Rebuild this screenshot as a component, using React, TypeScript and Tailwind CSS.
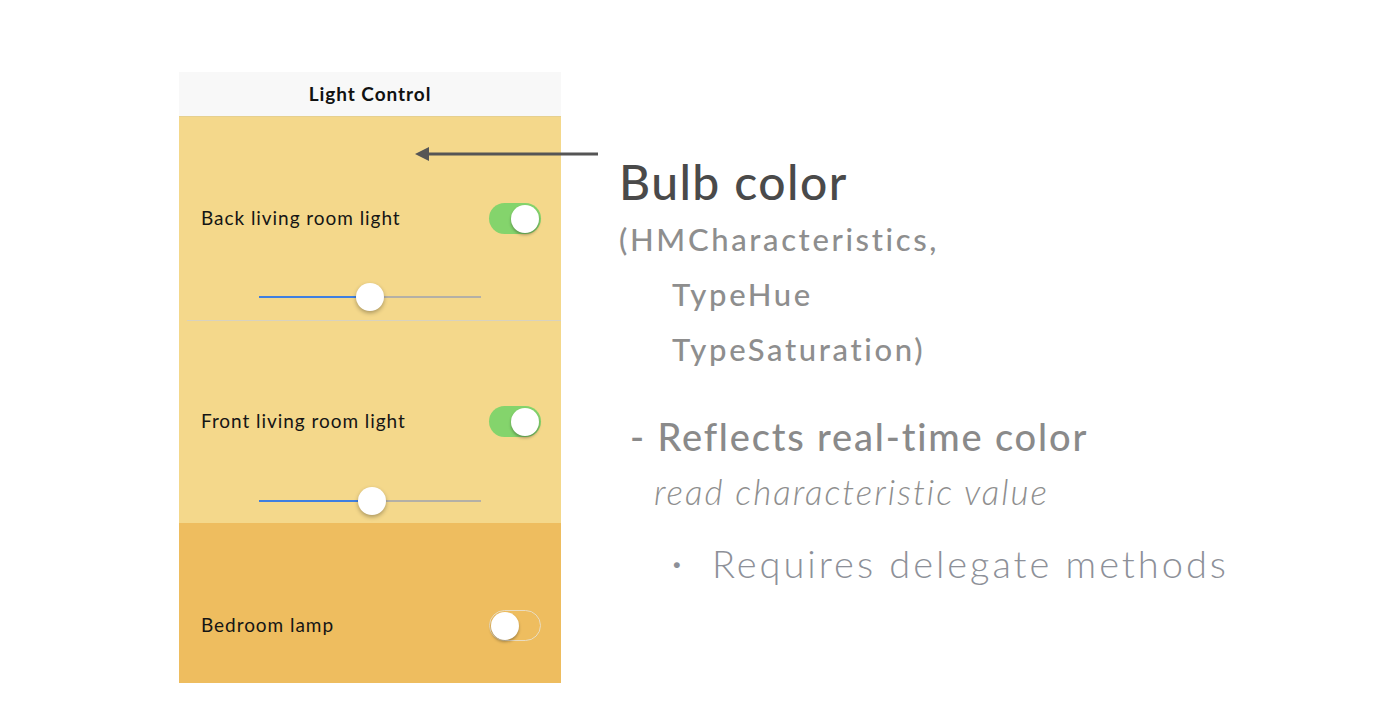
import { FunctionComponent } from "react";

const font = { fontFamily: "Lato, 'Noto Sans', sans-serif" };

type ToggleProps = { on: boolean };

const Toggle: FunctionComponent<ToggleProps> = ({ on }) => {
  return (
    <div
      className={
        on
          ? "w-[52px] h-[31px] rounded-full bg-[#84d46c] flex flex-row items-center justify-end px-[2px] box-border"
          : "w-[52px] h-[31px] rounded-full bg-transparent border-[1.5px] border-[#e9dcc0] flex flex-row items-center justify-start px-[1px] box-border"
      }
    >
      <div className="w-[28px] h-[28px] rounded-full bg-white shadow-[0_2px_3px_rgba(0,0,0,0.3)]" />
    </div>
  );
};

type SliderProps = { value: number };

const Slider: FunctionComponent<SliderProps> = ({ value }) => {
  return (
    <div className="w-[222px] h-[28px] relative flex flex-row items-center">
      <div className="h-[2px] bg-[#3f7fe0]" style={{ width: `${value}%` }} />
      <div className="h-[2px] flex-1 bg-[#b4b0a6]" />
      <div
        className="absolute top-0 w-[28px] h-[28px] rounded-full bg-white shadow-[0_2px_4px_rgba(0,0,0,0.3)]"
        style={{ left: `calc(${value}% - 14px)` }}
      />
    </div>
  );
};

const App: FunctionComponent = () => {
  return (
    <div className="w-[1387px] h-[708px] bg-white relative overflow-hidden" style={font}>
      <div className="flex flex-row items-start pt-[72px] pl-[179px]">
        {/* phone panel */}
        <div className="w-[382px] flex flex-col">
          <div className="h-[45px] bg-[#f8f8f8] border-b border-[#e6d08f] box-border flex items-center justify-center text-[19px] font-bold text-[#111] tracking-[0.05em]">
            Light Control
          </div>
          <section className="h-[203px] bg-[#f4d88b] flex flex-col items-center pt-[86px] box-border">
            <div className="self-stretch flex flex-row items-center justify-between pl-[22px] pr-[20px] h-[31px]">
              <span className="text-[19px] tracking-[0.05em] text-[#151515]">Back living room light</span>
              <Toggle on />
            </div>
            <div className="mt-[49px]">
              <Slider value={50} />
            </div>
          </section>
          <div className="h-px bg-[#f4d88b] flex flex-row">
            <div className="w-[8px]" />
            <div className="flex-1 bg-[#d8d2bf]" />
          </div>
          <section className="h-[202px] bg-[#f4d88b] flex flex-col items-center pt-[85px] box-border">
            <div className="self-stretch flex flex-row items-center justify-between pl-[22px] pr-[20px] h-[31px]">
              <span className="text-[19px] tracking-[0.05em] text-[#151515]">Front living room light</span>
              <Toggle on />
            </div>
            <div className="mt-[50px]">
              <Slider value={51} />
            </div>
          </section>
          <section className="h-[160px] bg-[#eebd5f] flex flex-col pt-[87px] box-border">
            <div className="flex flex-row items-center justify-between pl-[22px] pr-[20px] h-[31px]">
              <span className="text-[19px] tracking-[0.05em] text-[#151515]">Bedroom lamp</span>
              <Toggle on={false} />
            </div>
          </section>
        </div>

        {/* notes */}
        <div className="flex flex-col pl-[58px] pt-[82px]">
          <div className="text-[48px] leading-[56px] tracking-[0.03em] text-[#4a4a4a] font-medium">Bulb color</div>
          <div className="mt-[2px] text-[31px] leading-[55px] tracking-[0.085em] text-[#8e8e8e] font-medium">
            <div>(HMCharacteristics,</div>
            <div className="pl-[53px]">TypeHue</div>
            <div className="pl-[53px]">TypeSaturation)</div>
          </div>
          <div className="mt-[34px] pl-[11px] text-[38px] leading-[50px] tracking-[0.048em] text-[#8a8a8a] font-medium">
            - Reflects real-time color
          </div>
          <div className="mt-[8px] pl-[35px] text-[35px] leading-[44px] tracking-[0.057em] italic font-light text-[#8e8e8e]">
            read characteristic value
          </div>
          <div className="mt-[25px] pl-[52px] flex flex-row items-center h-[50px] text-[38px] tracking-[0.078em] font-light text-[#8d9098]">
            <span className="text-[20px] w-[41px]">•</span>
            <span>Requires delegate methods</span>
          </div>
        </div>
      </div>

      {/* arrow pointing at panel */}
      <svg className="absolute left-[413px] top-[144px]" width="186" height="20" viewBox="0 0 186 20">
        <line x1="14" y1="10" x2="185" y2="10" stroke="#555" strokeWidth="3" />
        <polygon points="2,10 16,3 16,17" fill="#555" />
      </svg>
    </div>
  );
};

export default App;
